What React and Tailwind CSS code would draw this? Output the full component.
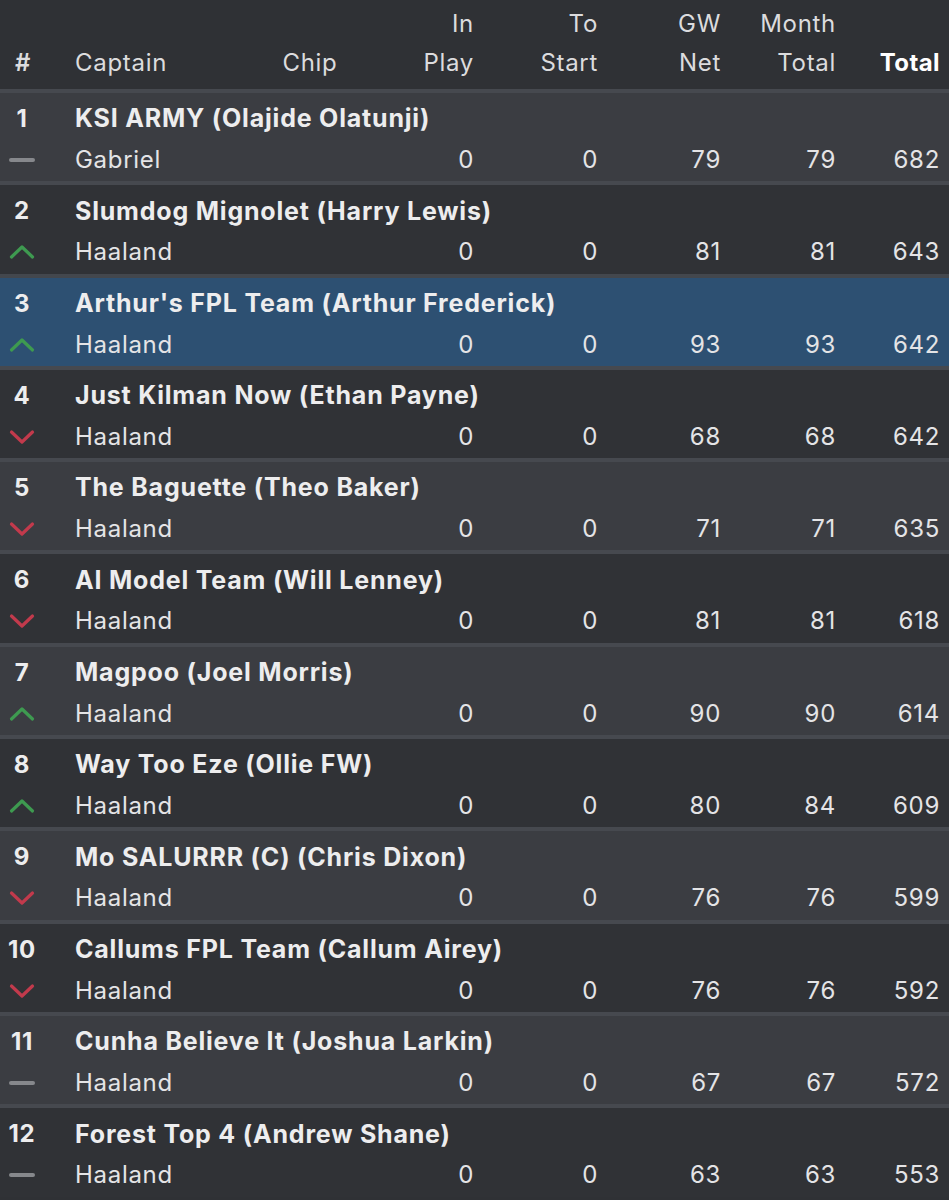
const rows = [
  { rank: 1, team: 'KSI ARMY (Olajide Olatunji)', captain: 'Gabriel', move: 'same', inPlay: 0, toStart: 0, gw: 79, month: 79, total: 682 },
  { rank: 2, team: 'Slumdog Mignolet (Harry Lewis)', captain: 'Haaland', move: 'up', inPlay: 0, toStart: 0, gw: 81, month: 81, total: 643 },
  { rank: 3, team: "Arthur's FPL Team (Arthur Frederick)", captain: 'Haaland', move: 'up', inPlay: 0, toStart: 0, gw: 93, month: 93, total: 642, me: true },
  { rank: 4, team: 'Just Kilman Now (Ethan Payne)', captain: 'Haaland', move: 'down', inPlay: 0, toStart: 0, gw: 68, month: 68, total: 642 },
  { rank: 5, team: 'The Baguette (Theo Baker)', captain: 'Haaland', move: 'down', inPlay: 0, toStart: 0, gw: 71, month: 71, total: 635 },
  { rank: 6, team: 'AI Model Team (Will Lenney)', captain: 'Haaland', move: 'down', inPlay: 0, toStart: 0, gw: 81, month: 81, total: 618 },
  { rank: 7, team: 'Magpoo (Joel Morris)', captain: 'Haaland', move: 'up', inPlay: 0, toStart: 0, gw: 90, month: 90, total: 614 },
  { rank: 8, team: 'Way Too Eze (Ollie FW)', captain: 'Haaland', move: 'up', inPlay: 0, toStart: 0, gw: 80, month: 84, total: 609 },
  { rank: 9, team: 'Mo SALURRR (C) (Chris Dixon)', captain: 'Haaland', move: 'down', inPlay: 0, toStart: 0, gw: 76, month: 76, total: 599 },
  { rank: 10, team: 'Callums FPL Team (Callum Airey)', captain: 'Haaland', move: 'down', inPlay: 0, toStart: 0, gw: 76, month: 76, total: 592 },
  { rank: 11, team: 'Cunha Believe It (Joshua Larkin)', captain: 'Haaland', move: 'same', inPlay: 0, toStart: 0, gw: 67, month: 67, total: 572 },
  { rank: 12, team: 'Forest Top 4 (Andrew Shane)', captain: 'Haaland', move: 'same', inPlay: 0, toStart: 0, gw: 63, month: 63, total: 553 },
]

const grid = 'grid grid-cols-[75px_185px_100px_114px_124px_123px_115px_104px] pr-[9px]'

function MoveIcon({ move }) {
  if (move === 'same') {
    return <div className="w-[26px] h-[4px] rounded-full bg-[#86888c]" />
  }
  return (
    <svg width="26" height="16" viewBox="0 0 26 16" fill="none">
      <path
        d={move === 'up' ? 'M2.5 13 L13 3 L23.5 13' : 'M2.5 3 L13 13 L23.5 3'}
        stroke={move === 'up' ? '#3e9a50' : '#c23a4c'}
        strokeWidth="3.2"
        strokeLinecap="round"
        strokeLinejoin="round"
      />
    </svg>
  )
}

function HeadCell({ top, bottom, bold, align = 'items-end' }) {
  return (
    <div className={`flex flex-col ${align}`}>
      <span className="h-[40px] leading-[40px]">{top}</span>
      <span className={`h-[38px] leading-[38px] ${bold ? 'font-bold text-white tracking-[0.4px]' : ''}`}>{bottom}</span>
    </div>
  )
}

export default function App() {
  return (
    <div className="w-[949px] h-[1200px] overflow-hidden bg-[#2f3135] text-[24px] tracking-[0.7px] text-[#dcdcde] font-['Inter','Noto_Sans',sans-serif]">
      {/* Header */}
      <div className={`${grid} h-[89px] pt-[4px]`}>
        <div className="flex flex-col">
          <span className="h-[40px]" />
          <span className="w-[46px] text-center h-[38px] leading-[38px] font-semibold">#</span>
        </div>
        <HeadCell top="" bottom="Captain" align="items-start" />
        <HeadCell top="" bottom="Chip" align="items-center" />
        <HeadCell top="In" bottom="Play" />
        <HeadCell top="To" bottom="Start" />
        <HeadCell top="GW" bottom="Net" />
        <HeadCell top="Month" bottom="Total" />
        <HeadCell top="" bottom="Total" bold />
      </div>

      {/* Rows */}
      {rows.map((r) => (
        <div
          key={r.rank}
          className={`border-t-4 h-[92.3px] ${
            r.me
              ? 'bg-[#2d5072] border-[#43474d]'
              : r.rank % 2 === 1
              ? 'bg-[#3b3d42] border-[#46494f]'
              : 'bg-[#303236] border-[#46494f]'
          }`}
        >
          <div className="flex h-[32px] mt-[10px] items-center">
            <span className="w-[75px] shrink-0">
              <span className="block w-[44px] text-center font-bold text-[#ededee]">{r.rank}</span>
            </span>
            <span className="text-[25px] font-bold text-[#ededee] tracking-[0.8px] whitespace-nowrap">{r.team}</span>
          </div>
          <div className={`${grid} h-[32px] mt-[7px] items-center text-[#e4e4e6]`}>
            <div className="w-[44px] flex justify-center">
              <MoveIcon move={r.move} />
            </div>
            <div>{r.captain}</div>
            <div />
            <div className="text-right">{r.inPlay}</div>
            <div className="text-right">{r.toStart}</div>
            <div className="text-right">{r.gw}</div>
            <div className="text-right">{r.month}</div>
            <div className="text-right">{r.total}</div>
          </div>
        </div>
      ))}
    </div>
  )
}
